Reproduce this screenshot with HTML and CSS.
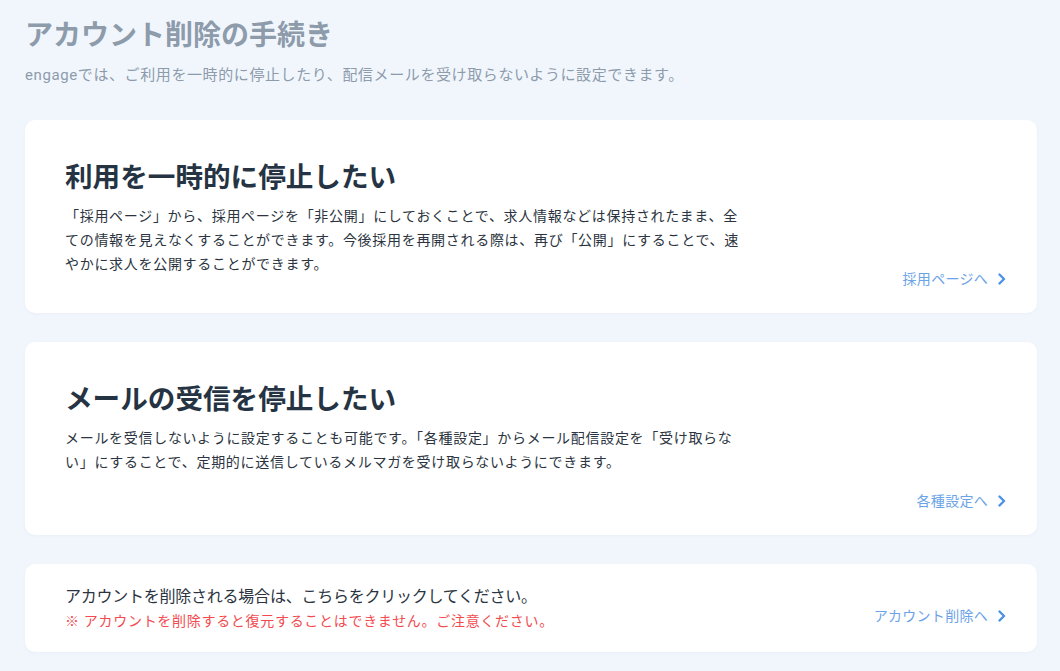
FILE: index.html
```html
<!DOCTYPE html>
<html lang="ja">
<head>
<meta charset="utf-8">
<title>アカウント削除の手続き</title>
<link rel="stylesheet" href="styles.css">
</head>
<body>
<main class="page">
  <header class="page-head">
    <h1 class="page-title">アカウント削除の手続き</h1>
    <p class="page-lead">engageでは、ご利用を一時的に停止したり、配信メールを受け取らないように設定できます。</p>
  </header>

  <section class="card">
    <div class="card-body">
      <h2 class="card-title">利用を一時的に停止したい</h2>
      <p class="card-text">「採用ページ」から、採用ページを「非公開」にしておくことで、求人情報などは保持されたまま、全ての情報を見えなくすることができます。今後採用を再開される際は、再び「公開」にすることで、速やかに求人を公開することができます。</p>
    </div>
    <a class="card-link" href="#">採用ページへ<svg class="chev" viewBox="0 0 8 12" width="8" height="12"><polyline points="1.5,1.5 6,6 1.5,10.5" fill="none" stroke="currentColor" stroke-width="2.4" stroke-linecap="round" stroke-linejoin="round"/></svg></a>
  </section>

  <section class="card">
    <div class="card-body">
      <h2 class="card-title">メールの受信を停止したい</h2>
      <p class="card-text">メールを受信しないように設定することも可能です。「各種設定」からメール配信設定を「受け取らない」にすることで、定期的に送信しているメルマガを受け取らないようにできます。</p>
    </div>
    <a class="card-link" href="#">各種設定へ<svg class="chev" viewBox="0 0 8 12" width="8" height="12"><polyline points="1.5,1.5 6,6 1.5,10.5" fill="none" stroke="currentColor" stroke-width="2.4" stroke-linecap="round" stroke-linejoin="round"/></svg></a>
  </section>

  <section class="card card-small">
    <div class="card-body">
      <p class="delete-text">アカウントを削除される場合は、こちらをクリックしてください。</p>
      <p class="delete-warn">※ アカウントを削除すると復元することはできません。ご注意ください。</p>
    </div>
    <a class="card-link" href="#">アカウント削除へ<svg class="chev" viewBox="0 0 8 12" width="8" height="12"><polyline points="1.5,1.5 6,6 1.5,10.5" fill="none" stroke="currentColor" stroke-width="2.4" stroke-linecap="round" stroke-linejoin="round"/></svg></a>
  </section>
</main>
</body>
</html>
```

FILE: styles.css
```css
* { box-sizing: border-box; }
html, body { margin: 0; padding: 0; }
body {
  background: #f1f6fd;
  font-family: Roboto, "Noto Sans CJK JP", sans-serif;
  color: #28323e;
}
.page {
  padding: 16px 23px 20px 25px;
  display: flex;
  flex-direction: column;
  gap: 29px;
}
.page-head { margin-bottom: 4px; }
.page-title {
  margin: 0;
  font-size: 28px;
  line-height: 40px;
  font-weight: 700;
  color: #8d9bab;
}
.page-lead {
  margin: 7px 0 0;
  font-size: 15px;
  line-height: 24px;
  letter-spacing: 0.04em;
  color: #8d9bab;
}
.card {
  background: #fff;
  border-radius: 10px;
  min-height: 193px;
  padding: 38px 31px 24px 40px;
  display: flex;
  justify-content: space-between;
  align-items: flex-end;
  box-shadow: 0 1px 3px rgba(40, 70, 120, 0.04);
}
.card-body {
  align-self: flex-start;
  max-width: 680px;
}
.card-title {
  margin: 0;
  font-size: 27.6px;
  line-height: 40px;
  font-weight: 700;
  color: #253343;
}
.card-text {
  margin: 6px 0 0;
  font-size: 14px;
  line-height: 24px;
  letter-spacing: 0.05em;
  color: #2b3440;
}
.card-link {
  display: flex;
  align-items: center;
  gap: 10px;
  font-size: 14px;
  line-height: 20px;
  letter-spacing: 0.02em;
  color: #6ba3e8;
  text-decoration: none;
  white-space: nowrap;
}
.chev { color: #4d92e6; display: block; }
.card-small {
  min-height: 0;
  padding: 21px 31px 19px 40px;
  align-items: center;
}
.card-small .card-body { max-width: none; }
.card-small .card-link { margin-top: 13px; }
.delete-text {
  margin: 0;
  font-size: 16px;
  line-height: 24px;
  letter-spacing: -0.015em;
  color: #2b3440;
}
.delete-warn {
  margin: 0;
  font-size: 14px;
  line-height: 24px;
  letter-spacing: 0.05em;
  color: #f24b4f;
}
```
